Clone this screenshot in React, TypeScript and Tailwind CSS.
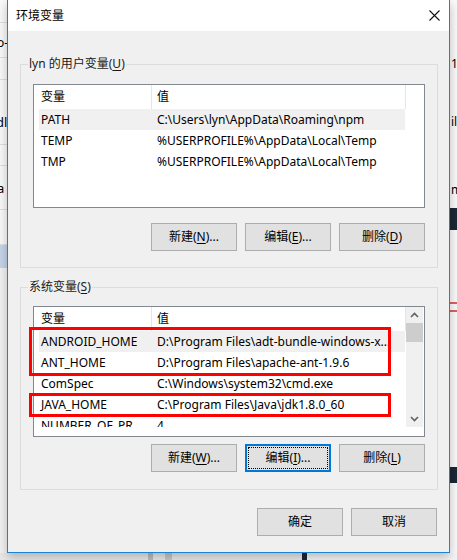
import React from "react";

const FONT = { fontFamily: '"Noto Sans", "Noto Sans CJK SC", sans-serif' };

function Mn({ children }: { children: React.ReactNode }) {
  return <span className="underline underline-offset-2">{children}</span>;
}

function Btn({ children, focused }: { children: React.ReactNode; focused?: boolean }) {
  if (focused) {
    return (
      <div className="w-[86px] h-[28px] border-2 border-[#0078d7] bg-[#e1e1e1] p-[1px]">
        <div className="h-full w-full border border-dotted border-black flex items-center justify-center text-[12px] text-black">
          {children}
        </div>
      </div>
    );
  }
  return (
    <div className="w-[86px] h-[28px] border border-[#adadad] bg-[#e1e1e1] flex items-center justify-center text-[12px] text-black">
      {children}
    </div>
  );
}

function GroupBox({ label, children, className }: { label: React.ReactNode; children: React.ReactNode; className?: string }) {
  return (
    <div className={"relative border border-[#dcdcdc] px-[12px] " + (className ?? "")}>
      <span className="absolute -top-[9px] left-[7px] bg-[#f0f0f0] px-[1px] leading-[16px] text-[12px] text-[#1a1a1a]">
        {label}
      </span>
      {children}
    </div>
  );
}

type Row = [string, string];

function Header() {
  return (
    <div className="flex h-[24px] shrink-0 text-[12px] text-black">
      <div className="w-[117px] pl-[7px] flex items-center">变量</div>
      <div className="w-px bg-[#e5e5e5]" />
      <div className="w-[253px] pl-[5px] flex items-center">值</div>
      <div className="w-px bg-[#e5e5e5]" />
      <div className="flex-1" />
    </div>
  );
}

function Rows({ rows, selected }: { rows: Row[]; selected: number }) {
  return (
    <>
      {rows.map(([k, v], i) => (
        <div
          key={k}
          className={
            "ml-[5px] w-[366px] h-[21px] shrink-0 flex items-center text-[12px] text-black whitespace-nowrap " +
            (i === selected ? "bg-[#f0f0f0]" : "")
          }
        >
          <div className="w-[118px] pl-[2px]">{k}</div>
          <div className="flex-1 overflow-hidden">{v}</div>
        </div>
      ))}
    </>
  );
}

function Chevron({ up }: { up?: boolean }) {
  return (
    <svg width="9" height="6" viewBox="0 0 9 6" className="text-[#606060]">
      <path d={up ? "M1 5 L4.5 1.5 L8 5" : "M1 1 L4.5 4.5 L8 1"} fill="none" stroke="currentColor" strokeWidth="1.6" />
    </svg>
  );
}

const userVars: Row[] = [
  ["PATH", "C:\\Users\\lyn\\AppData\\Roaming\\npm"],
  ["TEMP", "%USERPROFILE%\\AppData\\Local\\Temp"],
  ["TMP", "%USERPROFILE%\\AppData\\Local\\Temp"],
];

const sysVars: Row[] = [
  ["ANDROID_HOME", "D:\\Program Files\\adt-bundle-windows-x..."],
  ["ANT_HOME", "D:\\Program Files\\apache-ant-1.9.6"],
  ["ComSpec", "C:\\Windows\\system32\\cmd.exe"],
  ["JAVA_HOME", "C:\\Program Files\\Java\\jdk1.8.0_60"],
  ["NUMBER_OF_PR", "4"],
];

function Dialog() {
  return (
    <div className="w-[443px] h-[553px] border-x border-b border-[#1883d7] bg-[#f0f0f0] flex flex-col shadow-[0_4px_10px_rgba(0,0,0,0.25)] relative z-10">
      <div className="h-[31px] bg-white flex items-center justify-between pl-[8px] pr-[9px] shrink-0">
        <span className="text-[12px] text-black">环境变量</span>
        <svg width="11" height="11" viewBox="0 0 11 11">
          <path d="M0.5 0.5 L10.5 10.5 M10.5 0.5 L0.5 10.5" stroke="#111" strokeWidth="1.1" />
        </svg>
      </div>

      <div className="pl-[12px] pr-[11px] flex flex-col">
        <GroupBox
          className="mt-[33px] h-[204px] pt-[19px]"
          label={<>lyn 的用户变量(<Mn>U</Mn>)</>}
        >
          <div className="w-[392px] h-[124px] border border-[#828790] bg-white flex flex-col">
            <Header />
            <Rows rows={userVars} selected={0} />
          </div>
          <div className="mt-[15px] flex justify-end gap-[8px]">
            <Btn>新建(<Mn>N</Mn>)...</Btn>
            <Btn>编辑(<Mn>E</Mn>)...</Btn>
            <Btn>删除(<Mn>D</Mn>)</Btn>
          </div>
        </GroupBox>

        <GroupBox className="mt-[19px] h-[203px] pt-[18px]" label={<>系统变量(<Mn>S</Mn>)</>}>
          <div className="w-[392px] h-[131px] border border-[#828790] bg-white flex flex-col">
            <div className="h-[120px] flex overflow-hidden">
              <div className="w-[372px] flex flex-col overflow-hidden">
                <Header />
                <Rows rows={sysVars} selected={0} />
              </div>
              <div className="w-[17px] bg-[#f0f0f0] flex flex-col items-center">
                <div className="h-[16px] flex items-center justify-center">
                  <Chevron up />
                </div>
                <div className="w-[17px] h-[19px] bg-[#cdcdcd]" />
                <div className="flex-1" />
                <div className="h-[16px] flex items-center justify-center">
                  <Chevron />
                </div>
              </div>
            </div>
          </div>
          <div className="mt-[7px] flex justify-end gap-[8px]">
            <Btn>新建(<Mn>W</Mn>)...</Btn>
            <Btn focused>编辑(<Mn>I</Mn>)...</Btn>
            <Btn>删除(<Mn>L</Mn>)</Btn>
          </div>
        </GroupBox>

        <div className="mt-[18px] flex justify-end gap-[8px] pr-[1px]">
          <Btn>确定</Btn>
          <Btn>取消</Btn>
        </div>
      </div>
    </div>
  );
}

export default function App() {
  return (
    <div className="w-[457px] h-[560px] overflow-hidden bg-[#e9e9e9] relative" style={FONT}>
      <div className="flex h-[553px]">
        {/* window behind, left */}
        <div className="w-[7px] bg-[#fafafa] flex flex-col text-[12px] leading-none overflow-hidden">
          <div className="h-[23px] border-b border-[#e0e0e0]" />
          <div className="h-[35px] border-b border-[#e0e0e0] pt-[14px] -ml-[3px]">o-</div>
          <div className="h-[22px] border-b border-[#e0e0e0]" />
          <div className="h-[65px] border-b border-[#e0e0e0] pt-[36px] -ml-[4px] text-[13px]">dl</div>
          <div className="h-[21px] border-b border-[#e0e0e0]" />
          <div className="h-[44px] border-b border-[#e0e0e0] pt-[16px] -ml-[3px] text-[13px]">a</div>
          <div className="h-[35px] border-b border-[#e0e0e0]" />
          <div className="h-[23px] bg-[#c6d5ea]" />
          <div className="flex-1 bg-[#f3f3f3]" />
        </div>
        <Dialog />
        {/* window behind, right */}
        <div className="flex-1 bg-[#fafafa] flex flex-col text-[12px] leading-none overflow-hidden">
          <div className="h-[58px]" />
          <div className="h-[18px] pl-[1px]">1</div>
          <div className="h-[40px]" />
          <div className="h-[18px] pl-[1px]">il</div>
          <div className="h-[50px]" />
          <div className="h-[18px] pl-[1px]">m</div>
          <div className="h-[6px]" />
          <div className="h-[22px] bg-[#1c2735]" />
          <div className="h-[70px]" />
          <div className="h-[2px] bg-[#e06060] mt-[2px]" />
          <div className="h-[6px]" />
          <div className="h-[2px] bg-[#e06060]" />
          <div className="flex-1" />
          <div className="h-[16px] bg-[#1c2735]" />
          <div className="h-[70px]" />
        </div>
      </div>
      <div className="h-[7px] flex">
        <div className="w-[148px]" />
        <div className="w-[5px] bg-[#bdbdbd]" />
        <div className="w-[12px]" />
        <div className="w-[7px] bg-[#c8c8c8]" />
        <div className="w-[130px]" />
        <div className="w-[5px] bg-[#1c2735]" />
        <div className="flex-1 bg-[#f5f5f5]" />
      </div>

      {/* annotation boxes */}
      <div className="absolute left-[29px] top-[327px] w-[362px] h-[49px] border-[3px] border-[#ff0000] z-20" />
      <div className="absolute left-[29px] top-[393px] w-[362px] h-[24px] border-[3px] border-[#ff0000] z-20" />
    </div>
  );
}
